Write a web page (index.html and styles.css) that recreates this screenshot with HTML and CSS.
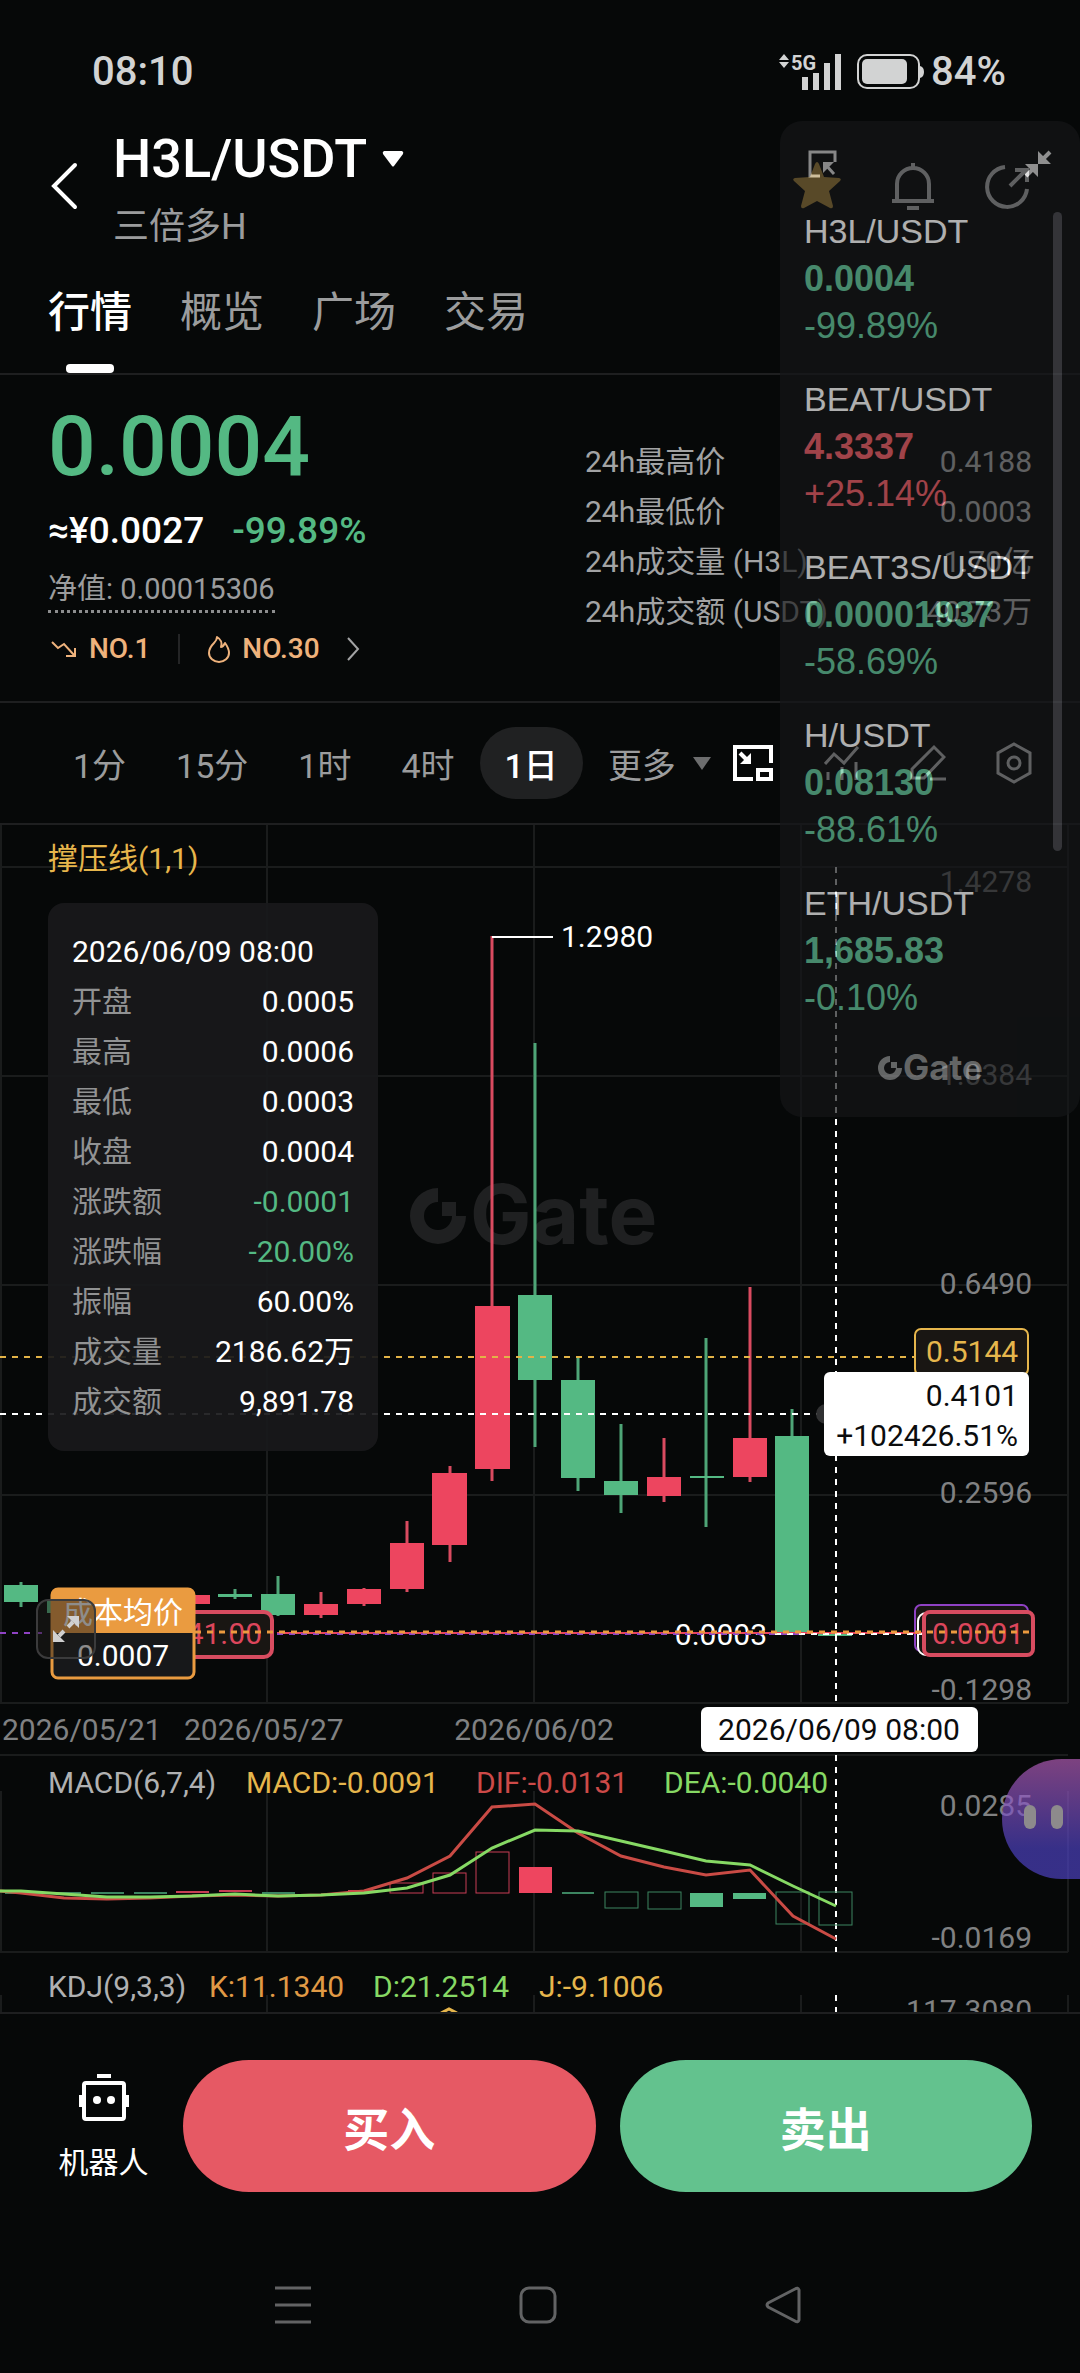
FILE: index.html
```html
<!DOCTYPE html>
<html lang="zh-CN">
<head>
  <meta charset="UTF-8" />
  <meta name="viewport" content="width=device-width, initial-scale=1.0"/>
  <title>H3L/USDT</title>
  <link rel="stylesheet" href="styles.css">
</head>
<body>
  <div class="status-bar">
    <span class="clock">08:10</span>
    <div class="status-right">
      <svg class="signal" width="64" height="38" viewBox="0 0 64 38" fill="#d2d3d3">
        <path d="M5 1l5 6H0zM5 15l5-6H0z"/>
        <text x="12" y="17" font-size="20" font-weight="700">5G</text>
        <rect x="23" y="24" width="6" height="13"/>
        <rect x="34" y="20" width="6" height="17"/>
        <rect x="45" y="10" width="6" height="27"/>
        <rect x="56" y="1" width="6" height="36"/>
      </svg>
      <svg width="68" height="36" viewBox="0 0 68 36">
        <rect x="1" y="1" width="61" height="33" rx="9" fill="none" stroke="#d2d3d3" stroke-width="2"/>
        <rect x="5" y="5" width="45" height="25" rx="5" fill="#d2d3d3"/>
        <path d="M63 12q4 1 4 6t-4 6z" fill="#d2d3d3"/>
      </svg>
      <span class="clock">84%</span>
    </div>
  </div>

  <header class="header">
    <button class="icon-btn back" aria-label="返回">
      <svg width="28" height="48" viewBox="0 0 28 48" fill="none" stroke="#fff" stroke-width="4" stroke-linecap="round"><path d="M24 3L3 24l21 21"/></svg>
    </button>
    <div class="title">
      <h1>H3L/USDT
        <svg width="22" height="16" viewBox="0 0 22 16" fill="#fff"><path d="M2 0h18q2 1 1 3l-9 12q-1 1-2 0L1 3Q0 1 2 0z"/></svg>
      </h1>
      <p>三倍多H</p>
    </div>
    <div class="header-icons">
      <button class="icon-btn" aria-label="收藏">
        <svg width="52" height="52" viewBox="0 0 52 52" fill="#e9b64a"><path d="M26 2q1 0 2 2l5 13 15 1q3 1 1 3L38 31l4 15q0 3-3 2l-13-7-13 7q-3 1-3-2l4-15L3 21q-2-2 1-3l15-1 5-13q1-2 2-2z"/></svg>
      </button>
      <button class="icon-btn" aria-label="提醒">
        <svg width="52" height="52" viewBox="0 0 52 52" fill="none" stroke="#fff" stroke-width="4"><path d="M10 40V24a16 16 0 0 1 32 0v16M5 41h42M20 48h12M26 3v6"/></svg>
      </button>
      <button class="icon-btn" aria-label="分享">
        <svg width="52" height="52" viewBox="0 0 52 52" fill="none" stroke="#fff" stroke-width="4"><path d="M22 7A20 20 0 1 0 44 29M27 26L43 10M32 10h12v12"/></svg>
      </button>
    </div>
  </header>

  <nav class="tabs">
    <a href="#" class="active">行情</a>
    <a href="#">概览</a>
    <a href="#">广场</a>
    <a href="#">交易</a>
  </nav>

  <section class="summary">
    <div class="price-box">
      <div class="price">0.0004</div>
      <div class="approx"><span>≈¥0.0027</span><span class="green">-99.89%</span></div>
      <div class="net-value">净值: 0.00015306</div>
      <div class="ranks">
        <a href="#">
          <svg width="26" height="20" viewBox="0 0 26 20" fill="none" stroke="#eeb27c" stroke-width="2"><path d="M1 3l6 6 6-4 10 11M24 9v8h-9"/></svg>
          NO.1
        </a>
        <i class="split"></i>
        <a href="#">
          <svg width="22" height="28" viewBox="0 0 22 28" fill="none" stroke="#eeb27c" stroke-width="2" stroke-linejoin="round"><path d="M9 2c5 3 5 7 4 10 2 0 3-2 4-4 3 4 4 7 4 10a10 9 0 0 1-20 0c0-5 3-8 5-10 2-2 3-4 3-6z"/></svg>
          NO.30
        </a>
        <svg width="14" height="24" viewBox="0 0 14 24" fill="none" stroke="#a2a3a4" stroke-width="2"><path d="M2 1l10 11L2 23"/></svg>
      </div>
    </div>
    <dl class="stats">
      <div><dt>24h最高价</dt><dd>0.4188</dd></div>
      <div><dt>24h最低价</dt><dd>0.0003</dd></div>
      <div><dt>24h成交量 (H3L)</dt><dd>1.70亿</dd></div>
      <div><dt>24h成交额 (USDT)</dt><dd>40.73万</dd></div>
    </dl>
  </section>

  <div class="toolbar">
    <div class="periods">
      <button>1分</button>
      <button>15分</button>
      <button>1时</button>
      <button>4时</button>
      <button class="active">1日</button>
      <button class="more">更多
        <svg width="18" height="13" viewBox="0 0 18 13" fill="#6c6d6e"><path d="M0 0h18L9 13z"/></svg>
      </button>
    </div>
    <div class="tools">
      <button class="icon-btn" aria-label="悬浮窗">
        <svg width="42" height="38" viewBox="0 0 42 38" fill="none" stroke="#fff" stroke-width="4"><path d="M21 35H3V3h36v16"/><rect x="26" y="26" width="13" height="9"/><path d="M8 9l8 8"/><path d="M19 9v11H8z" fill="#fff" stroke="none"/></svg>
      </button>
      <button class="icon-btn" aria-label="指标">
        <svg width="36" height="38" viewBox="0 0 36 38" fill="none" stroke="#fff" stroke-width="3"><path d="M1 20l9-10 10 9L34 3M4 28v8M18 23v13M32 18v18"/></svg>
      </button>
      <button class="icon-btn" aria-label="画线">
        <svg width="36" height="38" viewBox="0 0 36 38" fill="none" stroke="#fff" stroke-width="3"><path d="M2 34v-9L24 3l10 10-20 21zM20 35h16"/></svg>
      </button>
      <button class="icon-btn" aria-label="设置">
        <svg width="36" height="42" viewBox="0 0 36 42" fill="none" stroke="#fff" stroke-width="3"><path d="M18 2l16 9v20l-16 9-16-9V11z"/><circle cx="18" cy="21" r="6"/></svg>
      </button>
    </div>
  </div>

  <main class="chart">
    <!-- viewBox starts at 826, so y values are page coordinates -->
    <svg class="chart-svg" viewBox="0 826 1080 1187">
      <g class="grid">
        <path d="M0 868H1068M0 1077H1068M0 1286H1068M0 1496H1068M0 1704H1068M0 1756H1068M0 1953H1068"/>
        <path d="M1 826V1704M267 826V1704M534 826V1704M801 826V1704M1068 826V1704"/>
        <path d="M1 1792V1953M267 1792V1953M534 1792V1953M801 1792V1953M1068 1792V1953"/>
        <path d="M1 1996V2013M267 1996V2013M534 1996V2013M801 1996V2013M1068 1996V2013"/>
      </g>

      <g fill="#1f2021">
        <path d="M438 1189a28 28 0 1 0 28 28h-14a14 14 0 1 1-14-14z"/>
        <path d="M442 1203h14v14h-14z"/>
        <text class="logo-text" x="470" y="1245" font-size="82">Gate</text>
      </g>

      <text class="yellow" x="48" y="870">撑压线(1,1)</text>

      <g class="down">
        <path d="M21 1583V1608M64 1598V1616M235 1590V1600M278 1577V1617M535 1044V1448M578 1358V1492M621 1425V1514M706 1339V1528M792 1410V1634"/>
        <rect x="4" y="1586" width="34" height="17"/>
        <rect x="47" y="1602" width="34" height="12"/>
        <rect x="218" y="1595" width="34" height="3"/>
        <rect x="261" y="1595" width="34" height="21"/>
        <rect x="518" y="1296" width="34" height="85"/>
        <rect x="561" y="1381" width="34" height="98"/>
        <rect x="604" y="1482" width="34" height="14"/>
        <rect x="690" y="1477" width="34" height="2"/>
        <rect x="775" y="1437" width="34" height="197"/>
        <rect x="818" y="1635" width="34" height="2"/>
      </g>
      <g class="up">
        <path d="M321 1593V1619M364 1589V1607M407 1522V1593M450 1467V1563M492 937V1482M664 1439V1503M750 1288V1483"/>
        <rect x="176" y="1596" width="34" height="9"/>
        <rect x="304" y="1605" width="34" height="11"/>
        <rect x="347" y="1590" width="34" height="15"/>
        <rect x="390" y="1544" width="34" height="46"/>
        <rect x="432" y="1474" width="35" height="72"/>
        <rect x="475" y="1307" width="35" height="163"/>
        <rect x="647" y="1478" width="34" height="19"/>
        <rect x="733" y="1439" width="34" height="39"/>
      </g>

      <path d="M492 938H553" stroke="#fff" stroke-width="2"/>
      <text class="white" x="561" y="948">1.2980</text>
      <text class="white" x="767" y="1646" text-anchor="end">0.0003</text>

      <g class="axis" text-anchor="end">
        <text x="1032" y="893">1.4278</text>
        <text x="1032" y="1086">1.0384</text>
        <text x="1032" y="1295">0.6490</text>
        <text x="1032" y="1504">0.2596</text>
        <text x="1032" y="1701">-0.1298</text>
        <text x="1032" y="1817">0.0285</text>
        <text x="1032" y="1949">-0.0169</text>
        <text x="1032" y="2022">117.3080</text>
      </g>
      <g class="axis">
        <text x="2" y="1741">2026/05/21</text>
        <text x="184" y="1741">2026/05/27</text>
        <text x="534" y="1741" text-anchor="middle">2026/06/02</text>
      </g>

      <!-- price lines -->
      <g fill="none" stroke-width="2">
        <path d="M0 1358H914" stroke="#e2b347" stroke-dasharray="6 6"/>
        <path d="M0 1415H824" stroke="#fff" stroke-dasharray="6 6"/>
        <path d="M0 1634H48" stroke="#8f42c4" stroke-dasharray="6 6"/>
        <path d="M836 868V1704M836 1756V1953M836 1996V2013" stroke="#fff" stroke-dasharray="6 6"/>
      </g>

      <g fill="#191613" stroke-width="2">
        <rect x="915" y="1330" width="113" height="46" rx="6" stroke="#e6b64c"/>
        <rect x="915" y="1606" width="113" height="46" rx="6" stroke="#8f42c4"/>
        <rect x="918" y="1614" width="113" height="42" rx="8" stroke="#fff"/>
        <rect x="924" y="1613" width="109" height="43" rx="6" stroke="#d84c60" stroke-width="4"/>
        <rect x="100" y="1613" width="172" height="45" rx="8" stroke="#d84c60" stroke-width="4"/>
      </g>
      <text class="yellow" x="972" y="1363" text-anchor="middle">0.5144</text>
      <text class="red" x="978" y="1645" text-anchor="middle">0.0001</text>
      <text class="red" x="262" y="1645" text-anchor="end">41.00</text>

      <g fill="none" stroke-width="2">
        <path d="M277 1634H922" stroke="#e8435c"/>
        <path d="M277 1635H800" stroke="#8f42c4" stroke-dasharray="6 6"/>
        <path d="M775 1635H922" stroke="#fff" stroke-dasharray="6 6"/>
        <path d="M195 1633H1029" stroke="#ec9a3f" stroke-width="3" stroke-dasharray="6 6"/>
      </g>

      <path d="M826 1405a10 10 0 0 0 0 20z" fill="#303132"/>
      <rect x="824" y="1373" width="205" height="84" rx="6" fill="#fff"/>
      <g class="dark" text-anchor="end">
        <text x="1018" y="1407">0.4101</text>
        <text x="1018" y="1447">+102426.51%</text>
      </g>
      <rect x="701" y="1708" width="277" height="45" rx="6" fill="#fff"/>
      <text class="dark" x="839" y="1741" text-anchor="middle">2026/06/09 08:00</text>

      <rect x="52" y="1590" width="142" height="89" rx="6" fill="#17181a" stroke="#ea9b40" stroke-width="3"/>
      <path d="M52 1634v-38q0-6 6-6h130q6 0 6 6v38z" fill="#ea9b40"/>
      <text class="white" x="123" y="1624" text-anchor="middle">成本均价</text>
      <text class="white" x="123" y="1667" text-anchor="middle">0.0007</text>

      <!-- MACD -->
      <text x="48" y="1794" fill="#b0b1b2">MACD(6,7,4)</text>
      <text class="yellow" x="246" y="1794">MACD:-0.0091</text>
      <text x="476" y="1794" fill="#cd4a48">DIF:-0.0131</text>
      <text x="664" y="1794" fill="#86d964">DEA:-0.0040</text>
      <g fill="none" stroke="#c73d54">
        <rect x="390" y="1884" width="33" height="10"/>
        <rect x="433" y="1874" width="33" height="20"/>
        <rect x="476" y="1853" width="33" height="41"/>
        <path d="M176 1893h33M219 1892h33M348 1892h33" stroke-width="2"/>
      </g>
      <rect x="519" y="1868" width="33" height="26" fill="#ee455f"/>
      <g fill="none" stroke="#3c8561">
        <rect x="605" y="1893" width="33" height="16"/>
        <rect x="648" y="1893" width="33" height="17"/>
        <rect x="776" y="1893" width="33" height="32"/>
        <rect x="819" y="1893" width="33" height="33"/>
        <path d="M5 1894h76M91 1894h33M134 1894h33M262 1894h33M562 1894h32" stroke-width="2"/>
      </g>
      <g fill="#54b983">
        <rect x="690" y="1894" width="33" height="14"/>
        <rect x="733" y="1894" width="33" height="6"/>
      </g>
      <g fill="none" stroke-width="3">
        <polyline stroke="#c94b45" points="0,1892 21,1894 64,1899 107,1900 150,1899 192,1897 235,1896 278,1897 321,1896 364,1892 407,1879 450,1857 492,1808 535,1805 578,1834 621,1857 664,1868 706,1876 750,1871 793,1917 836,1940"/>
        <polyline stroke="#86d964" points="0,1892 21,1892 64,1895 107,1898 150,1898 192,1897 235,1895 278,1897 321,1896 364,1894 407,1889 450,1876 492,1849 535,1831 578,1832 621,1842 664,1852 706,1862 750,1866 793,1887 836,1907"/>
      </g>

      <!-- KDJ -->
      <text x="48" y="1998" fill="#b0b1b2">KDJ(9,3,3)</text>
      <text x="209" y="1998" fill="#e09a45">K:11.1340</text>
      <text x="373" y="1998" fill="#86d964">D:21.2514</text>
      <text class="yellow" x="539" y="1998">J:-9.1006</text>
      <path d="M441 2014l8-4 8 4" fill="none" stroke="#e6b64c" stroke-width="3"/>
    </svg>

    <table class="tooltip">
      <caption>2026/06/09 08:00</caption>
      <tr><th>开盘</th><td>0.0005</td></tr>
      <tr><th>最高</th><td>0.0006</td></tr>
      <tr><th>最低</th><td>0.0003</td></tr>
      <tr><th>收盘</th><td>0.0004</td></tr>
      <tr><th>涨跌额</th><td class="green">-0.0001</td></tr>
      <tr><th>涨跌幅</th><td class="green">-20.00%</td></tr>
      <tr><th>振幅</th><td>60.00%</td></tr>
      <tr><th>成交量</th><td>2186.62万</td></tr>
      <tr><th>成交额</th><td>9,891.78</td></tr>
    </table>

    <button class="expand" aria-label="全屏">
      <svg width="32" height="32" viewBox="0 0 32 32" fill="#d0d0d0" stroke="#d0d0d0" stroke-width="4"><path d="M9 23l5-5M18 14l5-5"/><path stroke="none" d="M29 3v12L17 3zM3 29V17l12 12z"/></svg>
    </button>
    <button class="assistant" aria-label="助手"><i></i><i></i></button>
  </main>

  <footer class="actions">
    <button class="robot">
      <svg width="52" height="50" viewBox="0 0 52 50" fill="none" stroke="#fff" stroke-width="4"><rect x="6" y="10" width="40" height="36" rx="2"/><path d="M19 3h14M3 22v12M49 22v12"/><circle cx="19" cy="27" r="4" fill="#fff" stroke="none"/><circle cx="33" cy="27" r="4" fill="#fff" stroke="none"/></svg>
      机器人
    </button>
    <button class="trade buy">买入</button>
    <button class="trade sell">卖出</button>
  </footer>

  <div class="system-nav">
    <button class="icon-btn" aria-label="菜单"><svg width="38" height="38" viewBox="0 0 38 38" stroke="#626364" stroke-width="3"><path d="M1 2h36M1 19h36M1 36h36"/></svg></button>
    <button class="icon-btn" aria-label="主页"><svg width="38" height="38" viewBox="0 0 38 38" fill="none" stroke="#626364" stroke-width="3"><rect x="2" y="2" width="34" height="34" rx="8"/></svg></button>
    <button class="icon-btn" aria-label="后退"><svg width="38" height="38" viewBox="0 0 38 38" fill="none" stroke="#626364" stroke-width="3" stroke-linejoin="round"><path d="M35 4v30q-1 3-4 1L4 21q-2-2 0-4L31 3q3-2 4 1z"/></svg></button>
  </div>

  <!-- floating watchlist -->
  <aside class="watchlist">
    <div class="watch-icons">
      <svg width="30" height="28" viewBox="0 0 30 28" fill="none" stroke="#c4c4c4" stroke-width="3"><path d="M12 26H2V2h25v10"/><path d="M17 14l9 10"/><path d="M15 12h11L15 23z" fill="#c4c4c4" stroke="none"/></svg>
      <svg width="28" height="28" viewBox="0 0 28 28" fill="#d0d0d0" stroke="#d0d0d0" stroke-width="4"><path d="M2 26l6-6M26 2l-6 6"/><path stroke="none" d="M14 1v13h13zM14 27V14H1z"/></svg>
    </div>
    <ul>
      <li><span>H3L/USDT</span><b>0.0004</b><em>-99.89%</em></li>
      <li class="rise"><span>BEAT/USDT</span><b>4.3337</b><em>+25.14%</em></li>
      <li><span>BEAT3S/USDT</span><b>0.00001937</b><em>-58.69%</em></li>
      <li><span>H/USDT</span><b>0.08130</b><em>-88.61%</em></li>
      <li><span>ETH/USDT</span><b>1,685.83</b><em>-0.10%</em></li>
    </ul>
    <svg class="watch-logo" width="116" height="32" viewBox="0 0 116 32" fill="#909192">
      <path d="M12 3a12 12 0 1 0 12 12h-6a6 6 0 1 1-6-6z"/><path d="M13 9h6v6h-6z"/>
      <text class="logo-text" x="25" y="27" font-size="35">Gate</text>
    </svg>
    <i class="scroll-thumb"></i>
  </aside>
</body>
</html>
```
FILE: styles.css
```css
* {
  box-sizing: border-box;
}
body {
  margin: 0;
  position: relative;
  overflow-x: hidden;
  background-color: #060808;
  color: #fff;
  font-family: Roboto, "Noto Sans CJK SC", sans-serif;
  font-size: 30px;
}
h1, p, dl, dd, ul {
  margin: 0;
  padding: 0;
}
a {
  color: inherit;
  text-decoration: none;
}
button {
  font-family: inherit;
  color: inherit;
  background: none;
  border: none;
  padding: 0;
  cursor: pointer;
}
svg {
  display: block;
}
.green {
  color: #54b983;
}
.icon-btn {
  display: flex;
  align-items: center;
  justify-content: center;
}

.status-bar {
  display: flex;
  justify-content: space-between;
  height: 121px;
  padding: 48px 74px 0 92px;
  color: #d2d3d3;
}
.clock {
  font-size: 40px;
  font-weight: 500;
  line-height: 48px;
}
.status-right {
  display: flex;
  align-items: center;
  height: 48px;
}
.signal {
  margin-right: 14px;
  overflow: visible;
}
.status-right .clock {
  margin-left: 6px;
}

.header {
  display: flex;
  padding: 6px 45px 0 51px;
}
.back {
  height: 48px;
  margin-top: 35px;
  margin-right: 34px;
}
.title {
  flex: 1;
}
.title h1 {
  display: flex;
  align-items: center;
  gap: 15px;
  font-size: 54px;
  font-weight: 500;
  line-height: 64px;
}
.title p {
  margin-top: 16px;
  color: #9b9c9d;
  font-size: 36px;
  line-height: 40px;
}
.header-icons {
  display: flex;
  align-items: flex-start;
  gap: 44px;
  padding-top: 33px;
}

.tabs {
  display: flex;
  gap: 48px;
  height: 128px;
  padding: 42px 48px 0;
  border-bottom: 2px solid #1e1f20;
  color: #9b9c9d;
  font-size: 42px;
  line-height: 48px;
}
.tabs a {
  display: flex;
  flex-direction: column;
  align-items: center;
  justify-content: space-between;
}
.tabs .active {
  color: #fff;
  font-weight: 500;
}
.tabs .active::after {
  content: "";
  width: 48px;
  height: 9px;
  border-radius: 4px;
  background-color: #fff;
}

.summary {
  display: flex;
  justify-content: space-between;
  padding: 24px 48px 36px;
  border-bottom: 2px solid #1e1f20;
}
.price-box {
  display: flex;
  flex-direction: column;
  align-items: flex-start;
}
.price {
  color: #54b983;
  font-size: 84px;
  font-weight: 500;
  line-height: 96px;
}
.approx {
  display: flex;
  gap: 28px;
  margin-top: 12px;
  font-size: 37px;
  font-weight: 500;
  line-height: 48px;
}
.net-value {
  margin-top: 16px;
  padding-bottom: 3px;
  border-bottom: 3px dotted #8d8e8f;
  color: #9b9c9d;
  font-size: 29px;
  line-height: 36px;
}
.ranks {
  display: flex;
  align-items: center;
  margin-top: 20px;
  padding-left: 3px;
  color: #eeb27c;
  font-size: 28px;
  font-weight: 500;
  line-height: 32px;
}
.ranks a {
  display: flex;
  align-items: center;
  gap: 12px;
}
.split {
  width: 2px;
  height: 30px;
  margin: 0 28px;
  background-color: #242526;
}
.ranks a + svg {
  margin-left: 26px;
}
.stats {
  width: 447px;
  padding-top: 38px;
  line-height: 50px;
}
.stats div {
  display: flex;
  justify-content: space-between;
  white-space: nowrap;
}
.stats dt {
  color: #a2a3a4;
}

.toolbar {
  display: flex;
  justify-content: space-between;
  align-items: center;
  height: 122px;
  padding: 0 48px;
  border-bottom: 2px solid #1e1f20;
}
.periods {
  display: flex;
}
.periods button {
  display: flex;
  align-items: center;
  gap: 17px;
  height: 72px;
  padding: 0 25px;
  border-radius: 36px;
  color: #9b9c9d;
  font-size: 34px;
}
.periods .active {
  background-color: #202122;
  color: #fff;
  font-weight: 500;
}
.periods .more {
  padding-right: 0;
}
.tools {
  display: flex;
  align-items: center;
  gap: 50px;
}

.chart {
  position: relative;
  border-bottom: 2px solid #1e1f20;
}
.chart-svg {
  width: 100%;
  height: auto;
  font-size: 30px;
}
.grid {
  stroke: #1a1c1c;
  stroke-width: 2;
}
.up {
  fill: #ed455f;
  stroke: none;
}
.down {
  fill: #54b983;
  stroke: none;
}
.up path {
  stroke: #d94b60;
  stroke-width: 3;
}
.down path {
  stroke: #4ea577;
  stroke-width: 3;
}
.axis {
  fill: #808182;
}
.white {
  fill: #fff;
}
.dark {
  fill: #0b0c0d;
}
.yellow {
  fill: #e6b64c;
}
.red {
  fill: #dd465c;
}
.logo-text {
  font-family: Inter, sans-serif;
  font-weight: 700;
}

.tooltip {
  position: absolute;
  left: 48px;
  top: 78px;
  width: 330px;
  padding: 24px;
  border-spacing: 0;
  border-radius: 16px;
  background-color: rgba(25, 25, 27, 0.93);
  line-height: 50px;
  display: flex;
  flex-direction: column;
}
.tooltip caption {
  text-align: left;
}
.tooltip tbody {
  display: block;
}
.tooltip tr {
  display: flex;
  justify-content: space-between;
}
.tooltip th {
  padding: 0;
  color: #919293;
  font-weight: 400;
}
.tooltip td {
  padding: 0;
}
.expand {
  position: absolute;
  left: 36px;
  bottom: 353px;
  width: 60px;
  height: 60px;
  padding: 12px;
  border: 2px solid #3b3b3c;
  border-radius: 12px;
  background-color: rgba(30, 28, 26, 0.5);
}
.assistant {
  position: absolute;
  right: 0;
  bottom: 133px;
  display: flex;
  gap: 15px;
  width: 78px;
  height: 120px;
  padding: 46px 0 0 22px;
  border-radius: 60px 0 0 60px;
  background-image: linear-gradient(rgba(186, 96, 190, 0.66), rgba(80, 68, 202, 0.66) 75%);
}
.assistant i {
  width: 12px;
  height: 24px;
  border-radius: 6px;
  background-color: #8d8a8c;
}

.actions {
  display: flex;
  align-items: center;
  gap: 24px;
  padding: 46px 48px 48px;
}
.robot {
  display: flex;
  flex-direction: column;
  align-items: center;
  gap: 20px;
  width: 111px;
  padding-top: 4px;
  font-size: 30px;
  line-height: 40px;
}
.trade {
  flex: 1;
  height: 132px;
  border-radius: 66px;
  font-size: 46px;
  font-weight: 700;
}
.buy {
  background-color: #e65964;
}
.sell {
  background-color: #63c28e;
}
.system-nav {
  display: flex;
  justify-content: center;
  gap: 207px;
  padding: 46px 5px 46px 0;
}

/* sits over the header, stats and chart */
.watchlist {
  position: absolute;
  top: 121px;
  right: 0;
  width: 300px;
  height: 996px;
  border-radius: 22px;
  background-color: #151618;
  opacity: 0.68;
  font-family: "Liberation Sans", sans-serif;
  font-size: 36px;
}
.watch-icons {
  display: flex;
  justify-content: space-between;
  padding: 29px 28px 0;
}
.watchlist ul {
  display: flex;
  flex-direction: column;
  gap: 27px;
  padding: 30px 24px 0;
  list-style: none;
}
.watchlist li {
  display: flex;
  flex-direction: column;
  line-height: 47px;
  color: #66c79c;
}
.watchlist .rise {
  color: #ea5f68;
}
.watchlist span {
  color: #fff;
  font-size: 34px;
}
.watchlist em {
  font-style: normal;
}
.watch-logo {
  position: absolute;
  left: 98px;
  bottom: 32px;
}
.scroll-thumb {
  position: absolute;
  top: 91px;
  right: 18px;
  width: 9px;
  height: 639px;
  border-radius: 5px;
  background-color: #4a4a50;
}
```
